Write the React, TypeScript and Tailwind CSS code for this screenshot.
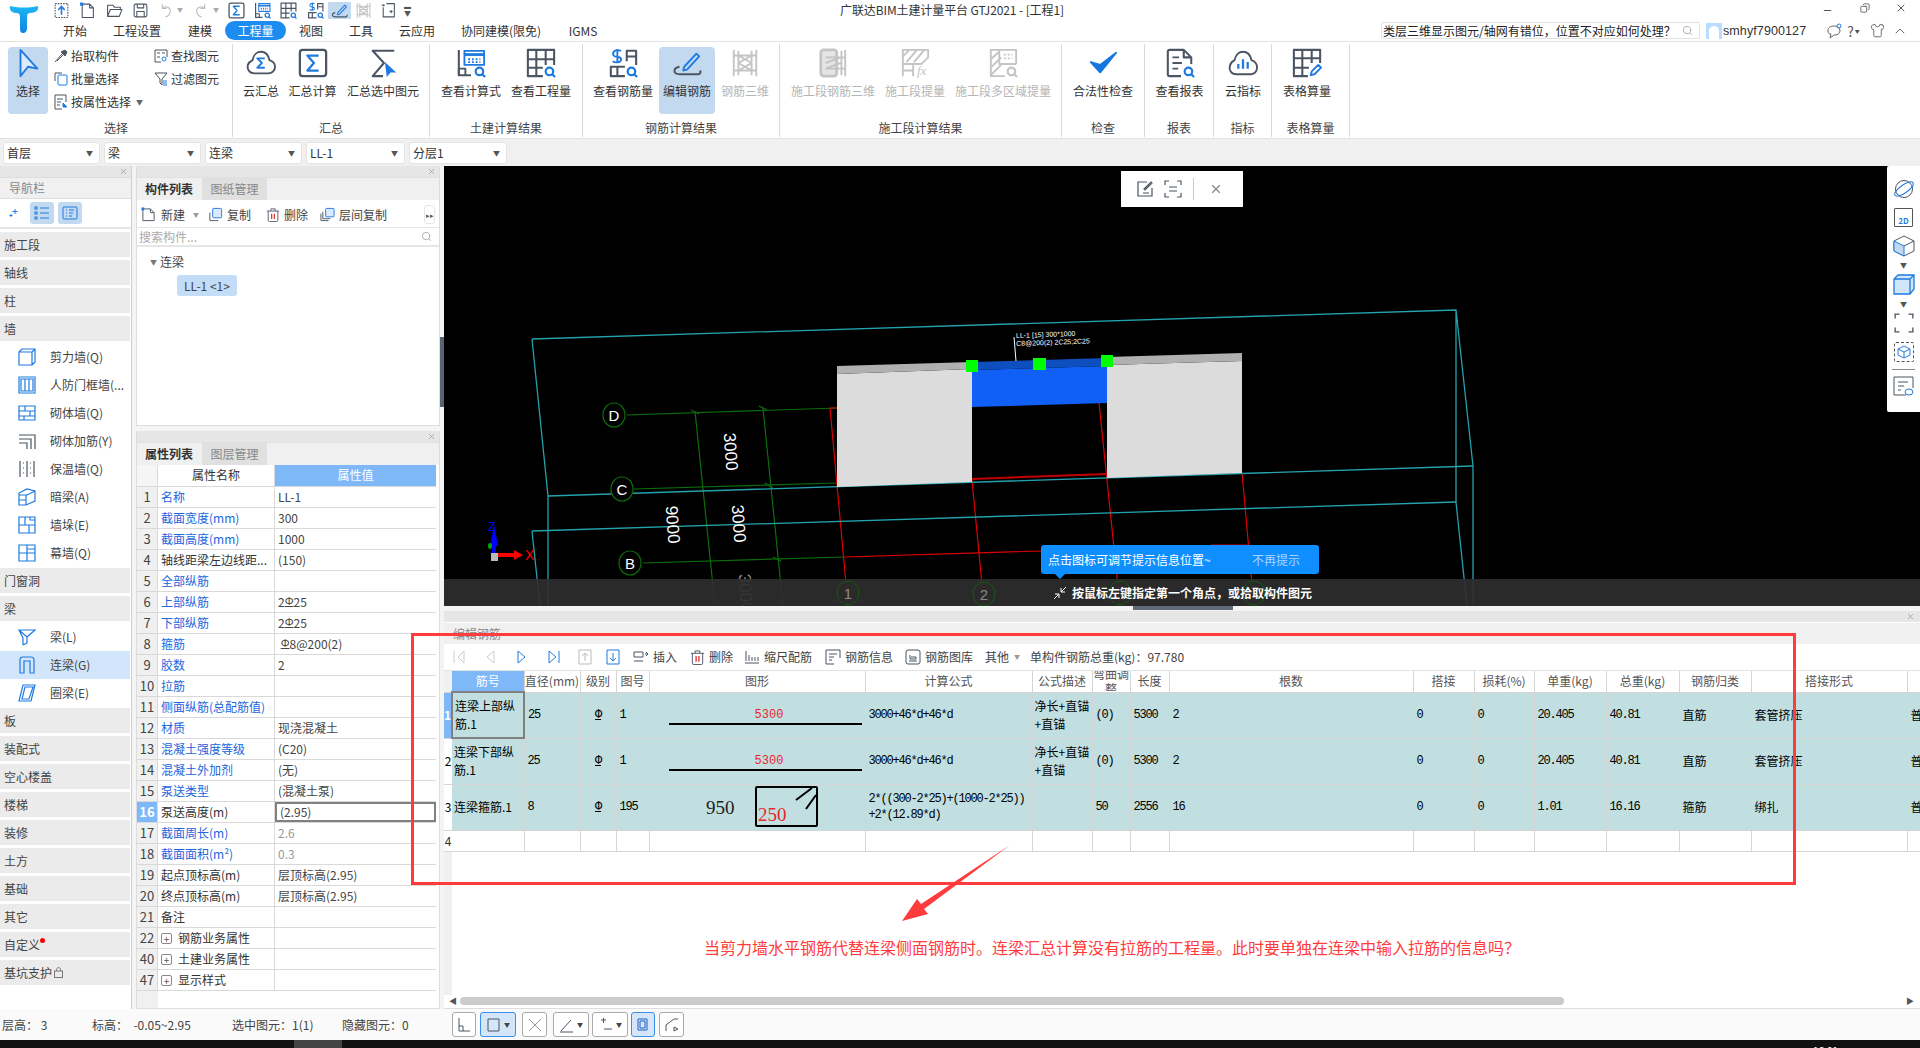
import { ChevronUp, Shirt, Search, X, Minus, Copy } from 'lucide-react'
import type { ReactNode } from 'react'

const FONT = '"Noto Sans CJK SC", "Noto Sans", sans-serif'
const DARK = '#4b5563'
const BLUE = '#1f7ae0'
const GREY = '#c4c4c4'

function Ico({ size = 30, children, className }: { size?: number; children: ReactNode; className?: string }) {
  return (
    <svg width={size} height={size} viewBox="0 0 32 32" fill="none" strokeWidth={2} strokeLinejoin="round" className={className}>
      {children}
    </svg>
  )
}

// ribbon icons, all on the same 32 box
const IconSelect = ({ size = 30 }: { size?: number }) => (
  <Ico size={size}><path d="M8 2 L26 22 L16 20 L8 30 Z" stroke={BLUE} fill="#dbeafe" /></Ico>
)
const IconCloudSigma = ({ size = 30 }: { size?: number }) => (
  <Ico size={size}>
    <path d="M9 27 C3 27 1 22 2 18 C3 15 5 14 7 13 C8 7 12 4 16 4 C21 4 24 8 25 13 C28 14 31 16 31 20 C31 25 27 27 24 27 Z" stroke={DARK} />
    <path d="M20 11 H12 L17 16 L12 21 H20" stroke={BLUE} />
  </Ico>
)
const IconBoxSigma = ({ size = 30 }: { size?: number }) => (
  <Ico size={size}>
    <rect x="2" y="2" width="28" height="28" rx="3" stroke={DARK} strokeWidth={2.4} />
    <path d="M22 8 H10 L17 16 L10 24 H22" stroke={BLUE} strokeWidth={2.4} />
  </Ico>
)
const IconSigmaArrow = ({ size = 30 }: { size?: number }) => (
  <Ico size={size}>
    <path d="M28 3 H5 L17 16 L5 30 H16" stroke={DARK} strokeWidth={2.2} />
    <path d="M18 15 L30 26 L24 26 L20 31 Z" fill={BLUE} />
  </Ico>
)
const Lens = ({ x = 25, y = 25 }: { x?: number; y?: number }) => (
  <g stroke={BLUE} strokeWidth={2.4}>
    <circle cx={x} cy={y} r="4" />
    <path d={`M${x + 3} ${y + 3} L${x + 6} ${y + 6}`} />
  </g>
)
const IconCalcFormula = ({ size = 30 }: { size?: number }) => (
  <Ico size={size}>
    <path d="M3 2 V29 H16" stroke={DARK} strokeWidth={2.2} />
    <path d="M3 29 V22 H10 V29" stroke={DARK} strokeWidth={2} />
    <rect x="9" y="3" width="21" height="15" stroke={BLUE} />
    <path d="M9 7 H30" stroke={BLUE} strokeWidth={3} />
    <path d="M13 12 H26 M13 15 H26" stroke={BLUE} strokeDasharray="2 2" />
    <Lens />
  </Ico>
)
const IconGridQ = ({ size = 30 }: { size?: number }) => (
  <Ico size={size}>
    <path d="M18 30 H2 V2 H30 V18 M2 12 H30 M2 21 H18 M11 2 V30 M21 2 V18" stroke={DARK} strokeWidth={2.2} />
    <Lens />
  </Ico>
)
const IconRebarQ = ({ size = 30 }: { size?: number }) => (
  <Ico size={size}>
    <path d="M18 30 H3 V20 H18 M10 20 V30 M20 14 V3 H30 V18 M20 9 H30" stroke={DARK} strokeWidth={2.2} />
    <path d="M14 3 C8 1 4 4 6 8 C8 11 14 8 14 12 C14 16 7 16 5 14 M10 1 V16" stroke={BLUE} />
    <Lens />
  </Ico>
)
const IconEditRebar = ({ size = 30 }: { size?: number }) => (
  <Ico size={size}>
    <path d="M13 20 L12 24 L16 23 L29 9 L26 6 Z" stroke={BLUE} />
    <path d="M8 20 C3 21 2 23 3 26 C4 28 6 28 9 28 H28 C30 28 31 26 30 24" stroke={DARK} strokeWidth={2.2} />
  </Ico>
)
const IconRebar3D = ({ size = 30, color = GREY }: { size?: number; color?: string }) => (
  <Ico size={size}>
    <path d="M4 2 V30 M28 2 V30 M9 3 V29 M23 3 V29 M4 8 H28 M4 24 H28 M9 8 L23 16 L9 24 M23 8 L9 16 L23 24" stroke={color} />
  </Ico>
)
const IconStage3D = ({ size = 30 }: { size?: number }) => (
  <Ico size={size}>
    <rect x="3" y="2" width="17" height="28" rx="3" stroke={GREY} strokeWidth={3} fill="#e5e5e5" />
    <path d="M29 2 V30 M25 3 V29 M8 10 H29 M8 22 H29 M8 16 L24 10 M8 22 L24 16" stroke={GREY} />
  </Ico>
)
const IconStageFx = () => (
  <Ico>
    <path d="M3 2 H30 V10 L23 17 H3 Z M10 2 L3 9 M18 2 L7 15 M26 2 L15 15" stroke={GREY} />
    <path d="M3 17 V30 M3 24 H14 M14 17 V30" stroke={GREY} />
    <text x="18" y="29" fontSize="14" fontStyle="italic" fontFamily="Liberation Serif" fill={GREY}>fx</text>
  </Ico>
)
const IconStageMulti = () => (
  <Ico>
    <path d="M18 30 H3 V2 H30 V17 M12 2 V17 H30" stroke={GREY} />
    <path d="M3 12 L12 4 M3 21 L14 10 M3 29 L14 18" stroke={GREY} />
    <path d="M17 7 H26 M17 11 H26" stroke={GREY} strokeDasharray="2 2" />
    <g stroke={GREY} strokeWidth={2.4}><circle cx="25" cy="25" r="4" /><path d="M28 28 L31 31" /></g>
  </Ico>
)
const IconCheck = () => (
  <Ico><path d="M3 15 L13 26 L30 5 L13 18 Z" fill="#1677e0" stroke="#1677e0" /></Ico>
)
const IconReport = () => (
  <Ico>
    <path d="M17 30 H5 A2 2 0 0 1 3 28 V4 A2 2 0 0 1 5 2 H20 L28 10 V17 M20 2 V10 H28" stroke={DARK} strokeWidth={2.2} />
    <path d="M8 10 H15 M8 16 H18 M8 22 H14" stroke={DARK} />
    <Lens />
  </Ico>
)
const IconCloudBars = () => (
  <Ico>
    <path d="M9 28 C3 28 1 23 2 19 C3 15 5 14 7 13 C8 7 12 4 16 4 C21 4 24 8 25 13 C28 14 31 17 31 21 C31 26 27 28 24 28 Z" stroke={DARK} />
    <path d="M11 17 V22 M16 12 V22 M21 15 V22" stroke={BLUE} strokeWidth={2.4} />
  </Ico>
)
const IconGridEdit = () => (
  <Ico>
    <path d="M17 30 H2 V2 H30 V16 M2 11 H30 M2 21 H18 M11 2 V30 M21 2 V16" stroke={DARK} strokeWidth={2.2} />
    <path d="M20 29 L21 25 L28 18 L31 21 L24 28 Z" stroke={BLUE} />
  </Ico>
)
// bin with the two red bars the reference draws inside it
const IconBin = ({ size = 15 }: { size?: number }) => (
  <svg width={size} height={size} viewBox="0 0 16 16" fill="none" stroke={DARK}>
    <path d="M1 3.5 H15 M5.5 3.5 V1 H10.5 V3.5 M2.5 3.5 V14 A1.5 1.5 0 0 0 4 15.5 H12 A1.5 1.5 0 0 0 13.5 14 V3.5" />
    <path d="M6.5 6.5 V12.5 M9.5 6.5 V12.5" stroke="#e02020" strokeWidth={1.3} />
  </svg>
)

function BigButton({ label, icon, w, active, muted }: { label: string; icon: ReactNode; w: number; active?: boolean; muted?: boolean }) {
  return (
    <div
      className={`flex flex-col items-center shrink-0 h-[67px] rounded ${active ? 'bg-[#c3d9f0]' : ''}`}
      style={{ width: w }}
    >
      <div className="h-[32px] flex items-center">{icon}</div>
      <span className={`mt-[4px] whitespace-nowrap ${muted ? 'text-[#b5b5b5]' : 'text-[#333]'}`}>{label}</span>
    </div>
  )
}

function RibbonGroup({ label, w, children }: { label: string; w: number; children: ReactNode }) {
  return (
    <div className="shrink-0 flex flex-col border-r border-[#d9d9d9] h-[93px] mt-[2px]" style={{ width: w }}>
      <div className="flex h-[76px] pt-[3px]">{children}</div>
      <div className="text-center text-[#444] leading-[16px]">{label}</div>
    </div>
  )
}

function SmallAction({ icon, label, caret }: { icon: ReactNode; label: string; caret?: boolean }) {
  return (
    <div className="flex items-center h-[23px] whitespace-nowrap">
      <span className="w-[17px] flex justify-center">{icon}</span>
      <span className="ml-[2px] text-[#333]">{label}</span>
      {caret && <span className="ml-[5px] text-[7px] text-[#666]">▼</span>}
    </div>
  )
}

function Caret() {
  return <span className="text-[7px] text-[#555]">▼</span>
}

function Combo({ value, w }: { value: string; w: number }) {
  return (
    <div className="h-[22px] bg-white rounded-[3px] border border-[#e4e4e4] flex items-center justify-between px-[3px] pr-[6px]" style={{ width: w }}>
      <span className="text-[#333]">{value}</span>
      <Caret />
    </div>
  )
}

const MENUS: [string, number][] = [
  ['开始', 48], ['工程设置', 76], ['建模', 50], ['工程量', 61], ['视图', 50], ['工具', 50], ['云应用', 62], ['协同建模(限免)', 106], ['IGMS', 58],
]

function QuickBar() {
  const s = 17
  return (
    <div className="flex items-center w-[420px] h-[20px]">
      <span className="ml-[53px] w-[26px]"><Ico size={s}><rect x="4" y="3" width="24" height="26" stroke={DARK} strokeDasharray="3 2" /><path d="M16 24 V10 M10 15 L16 8 L22 15" stroke={BLUE} strokeWidth={3} /></Ico></span>
      <span className="w-[27px]"><Ico size={s}><path d="M6 4 H20 L27 11 V29 H6 Z M20 4 V11 H27" stroke={DARK} /><rect x="2" y="1" width="6" height="6" fill={BLUE} /></Ico></span>
      <span className="w-[26px]"><Ico size={s}><path d="M3 27 V6 H13 L16 10 H27 V14 M3 27 L8 14 H30 L25 27 Z" stroke={DARK} /></Ico></span>
      <span className="w-[25px]"><Ico size={s}><rect x="4" y="4" width="24" height="24" rx="3" stroke={DARK} /><path d="M10 4 V11 H22 V4 M9 28 V18 H23 V28" stroke={DARK} /></Ico></span>
      <span className="w-[36px] flex items-center"><Ico size={s}><path d="M10 12 C16 6 26 10 25 18 C24 24 20 27 16 28 M10 4 V12 H18" stroke="#bbb" /></Ico><span className="text-[6px] text-[#aaa] ml-[3px]">▼</span></span>
      <span className="w-[35px] flex items-center"><Ico size={s}><path d="M22 12 C16 6 6 10 7 18 C8 24 12 27 16 28 M22 4 V12 H14" stroke="#bbb" /></Ico><span className="text-[6px] text-[#aaa] ml-[3px]">▼</span></span>
      <span className="w-[26px]"><IconBoxSigma size={s} /></span>
      <span className="w-[26px]"><IconCalcFormula size={s} /></span>
      <span className="w-[27px]"><IconGridQ size={s} /></span>
      <span className="w-[17px] -mr-[1px]"><IconRebarQ size={s} /></span>
      <span className="ml-[5px] w-[23px] h-[17px] bg-[#c3d9f0] flex justify-center"><IconEditRebar size={s} /></span>
      <span className="ml-[4px] w-[25px]"><IconRebar3D size={s} /></span>
      <span className="w-[24px]"><Ico size={s}><path d="M12 3 H27 V28 H6 V10 M18 18 H24 M21 15 V21 M7 4 V8 M3 6 H9" stroke={DARK} /></Ico></span>
      <span className="text-[7px] text-[#555] leading-[7px]">▬<br />▼</span>
    </div>
  )
}

function TopBar() {
  return (
    <div className="h-[41px] flex shrink-0 relative">
      <div className="absolute left-[8px] top-[4px]">
        <svg width="32" height="30" viewBox="0 0 32 30">
          <defs>
            <linearGradient id="logoGrad" x1="0" y1="0" x2="0" y2="1">
              <stop offset="0" stopColor="#1fb6f2" />
              <stop offset="1" stopColor="#0a84e8" />
            </linearGradient>
          </defs>
          <path d="M2 2 C12 4 20 4 30 2 C31 6 28 9 22 9 C20 9 19 10 19 13 V24 C19 28 17 29 15 29 C12 29 12 26 12 23 V13 C12 10 11 9 8 9 C4 9 1 6 2 2 Z" fill="url(#logoGrad)" />
        </svg>
      </div>
      <div className="flex-1 flex flex-col">
        <div className="flex h-[20px] items-center">
          <QuickBar />
          <span className="ml-[420px] whitespace-nowrap text-[#333] tracking-[-0.1px]">广联达BIM土建计量平台 GTJ2021 - [工程1]</span>
          <div className="ml-auto flex items-center text-[#555] mt-[-4px]">
            <Minus size={11} strokeWidth={2.5} className="mt-[5px]" />
            <Copy size={10} className="ml-[27px] -scale-x-100" />
            <X size={12} className="ml-[25px] mr-[13px]" />
          </div>
        </div>
        <div className="flex h-[21px] items-center pl-[51px]">
          {MENUS.map(([m, w]) => (
            <span
              key={m}
              style={{ width: w }}
              className={`shrink-0 text-center whitespace-nowrap leading-[19px] ${m === '工程量' ? 'bg-[#1c8cf0] text-white rounded-full' : 'text-[#333]'}`}
            >
              {m}
            </span>
          ))}
          <div className="ml-[769px] w-[319px] h-[17px] bg-white rounded-[2px] border border-[#e2e2e2] flex items-center overflow-hidden">
            <span className="whitespace-nowrap flex-1 text-[#222] pl-[1px] overflow-hidden">类层三维显示图元/轴网有错位，位置不对应如何处理？</span>
            <Search size={11} className="text-[#aaa] mx-[6px] shrink-0" />
          </div>
          <div className="ml-[6px] w-[16px] h-[16px] bg-[#bcdcff] flex items-end justify-center overflow-hidden">
            <div className="w-[10px] h-[13px] bg-white rounded-t-full" />
          </div>
          <span className="ml-[1px] text-[#333] font-['Liberation_Sans'] tracking-[0.1px] text-[12.5px]">smhyf7900127</span>
          <div className="flex items-center text-[#555] ml-[20px]">
            <svg width="16" height="16" viewBox="0 0 16 16" fill="none" stroke="#666"><path d="M2 8 C2 4 5 3 8 3 C12 3 14 5 14 8 C14 11 11 12 8 12 L4 15 L5 11 C3 11 2 10 2 8 Z" /><circle cx="13" cy="3" r="2" stroke={BLUE} /></svg>
            <span className="ml-[5px] text-[14px] leading-none">?</span>
            <span className="text-[5px] ml-[1px]">▼</span>
            <Shirt size={15} className="ml-[10px]" strokeWidth={1.3} />
            <ChevronUp size={16} className="ml-[7px]" strokeWidth={1.3} />
          </div>
        </div>
      </div>
    </div>
  )
}

function Ribbon() {
  return (
    <div className="h-[98px] border-t border-b border-[#e3e3e3] flex shrink-0 pl-[0px]">
      <RibbonGroup label="选择" w={233}>
        <div className="ml-[8px]"><BigButton label="选择" icon={<IconSelect />} w={40} active /></div>
        <div className="ml-[4px] w-[105px] -mt-[3px] flex flex-col">
          <SmallAction label="抬取构件" icon={<svg width="14" height="14" viewBox="0 0 14 14" fill="none" stroke={DARK}><path d="M1 13 L8 5 M3 12 L9 6" /><path d="M7 3 L11 7 L13 3 L11 1 Z" fill={DARK} /></svg>} />
          <SmallAction label="批量选择" icon={<svg width="14" height="14" viewBox="0 0 14 14" fill="none" stroke={BLUE}><rect x="4" y="3" width="9" height="10" rx="1" /><path d="M1 9 V1 H8" stroke={DARK} /></svg>} />
          <SmallAction label="按属性选择" caret icon={<svg width="14" height="16" viewBox="0 0 14 16" fill="none" stroke={DARK}><path d="M8 15 H1 V1 H12 V8 M3 5 H9 M3 8 H7 M3 11 H6" /><path d="M9 9 L13 13 H9 Z" fill={BLUE} stroke={BLUE} /></svg>} />
        </div>
        <div className="-ml-[5px] -mt-[3px] flex flex-col">
          <SmallAction label="查找图元" icon={<svg width="14" height="14" viewBox="0 0 14 14" fill="none" stroke={DARK}><path d="M7 13 H1 V1 H13 V8 M3 4 H6 M8 4 H11 M3 8 H6" /><circle cx="10" cy="10" r="2" stroke={BLUE} /></svg>} />
          <SmallAction label="过滤图元" icon={<svg width="14" height="14" viewBox="0 0 14 14" fill="none" stroke={DARK}><path d="M1 1 H13 L8 7 V13 L6 11 V7 Z" /><path d="M9 9 H13 M9 11 H13 M9 13 H13" stroke={BLUE} /></svg>} />
        </div>
      </RibbonGroup>
      <RibbonGroup label="汇总" w={197}>
        <BigButton label="云汇总" icon={<IconCloudSigma />} w={56} />
        <BigButton label="汇总计算" icon={<IconBoxSigma />} w={47} />
        <BigButton label="汇总选中图元" icon={<IconSigmaArrow />} w={94} />
      </RibbonGroup>
      <RibbonGroup label="土建计算结果" w={153}>
        <BigButton label="查看计算式" icon={<IconCalcFormula />} w={82} />
        <BigButton label="查看工程量" icon={<IconGridQ />} w={58} />
      </RibbonGroup>
      <RibbonGroup label="钢筋计算结果" w={197}>
        <div className="w-[76px] pl-[4px] shrink-0"><BigButton label="查看钢筋量" icon={<IconRebarQ />} w={72} /></div>
        <BigButton label="编辑钢筋" icon={<IconEditRebar />} w={56} active />
        <BigButton label="钢筋三维" icon={<IconRebar3D />} w={60} muted />
      </RibbonGroup>
      <RibbonGroup label="施工段计算结果" w={282}>
        <BigButton label="施工段钢筋三维" icon={<IconStage3D />} w={106} muted />
        <BigButton label="施工段提量" icon={<IconStageFx />} w={58} muted />
        <BigButton label="施工段多区域提量" icon={<IconStageMulti />} w={118} muted />
      </RibbonGroup>
      <RibbonGroup label="检查" w={83}><BigButton label="合法性检查" icon={<IconCheck />} w={82} /></RibbonGroup>
      <RibbonGroup label="报表" w={69}><BigButton label="查看报表" icon={<IconReport />} w={69} /></RibbonGroup>
      <RibbonGroup label="指标" w={58}><BigButton label="云指标" icon={<IconCloudBars />} w={58} /></RibbonGroup>
      <RibbonGroup label="表格算量" w={78}><BigButton label="表格算量" icon={<IconGridEdit />} w={70} /></RibbonGroup>
    </div>
  )
}

function CloseBar({ right = 3 }: { right?: number }) {
  return (
    <div className="h-[11px] bg-[#e6e6e6] flex items-center justify-end shrink-0" style={{ paddingRight: right }}>
      <X size={9} className="text-[#999]" />
    </div>
  )
}

type NavSub = { label: string; icon: ReactNode; active?: boolean }
const wallIcon = (d: string, color = BLUE) => (
  <svg width="18" height="18" viewBox="0 0 18 18" fill="none" stroke={color} strokeWidth={1.2}><path d={d} /></svg>
)
const WALLS: NavSub[] = [
  { label: '剪力墙(Q)', icon: wallIcon('M1 4 H14 V17 H1 Z M1 4 L4 1 H17 V14 L14 17 M14 4 L17 1') },
  { label: '人防门框墙(...', icon: wallIcon('M1 1 H17 V17 H1 Z M3 3 H15 V15 H3 Z M7 3 V15 M11 3 V15') },
  { label: '砌体墙(Q)', icon: wallIcon('M1 2 H17 V16 H1 Z M1 7 H17 M1 12 H17 M7 2 V7 M12 7 V12 M6 12 V16') },
  { label: '砌体加筋(Y)', icon: wallIcon('M1 3 H17 V17 M1 7 H13 V17 M1 11 H9 V17', DARK) },
  { label: '保温墙(Q)', icon: wallIcon('M2 1 V17 M9 1 V17 M16 1 V17 M5 3 H6 M12 3 H13 M5 8 H6 M12 8 H13 M5 13 H6 M12 13 H13', DARK) },
  { label: '暗梁(A)', icon: wallIcon('M1 7 V17 H8 L17 13 V3 L9 1 L1 5 Z M1 7 H9 L17 3 M8 7 V17 M1 12 H8') },
  { label: '墙垛(E)', icon: wallIcon('M1 1 H17 V17 H1 Z M1 9 H17 M7 1 V9 M11 9 V17 M12 1 V4 H17') },
  { label: '幕墙(Q)', icon: wallIcon('M1 1 H17 V17 H1 Z M1 9 H17 M9 1 V17 M9 5 H17') },
]
const BEAMS: NavSub[] = [
  { label: '梁(L)', icon: wallIcon('M1 2 H17 L9 9 Z M1 2 L5 10 V17 M17 2 L9 9 V15 L5 17') },
  { label: '连梁(G)', icon: wallIcon('M2 17 V4 C2 2 3 1 5 1 H13 C15 1 16 2 16 4 V17 H12 V5 H6 V17 Z'), active: true },
  { label: '圈梁(E)', icon: wallIcon('M5 1 H17 L13 17 H1 Z M7 3 H15 L11 15 H4 Z') },
]

function NavHead({ label, children }: { label?: string; children?: ReactNode }) {
  return (
    <div className="h-[25px] mt-[3px] mr-[1px] bg-[#ebebeb] flex items-center pl-[4px] text-[#444] shrink-0">
      {label}
      {children}
    </div>
  )
}

function NavSubs({ items }: { items: NavSub[] }) {
  return (
    <div className="mt-[2px] -mb-[2px]">
      {items.map((it) => (
        <div key={it.label} className={`h-[28px] flex items-center mr-[1px] ${it.active ? 'bg-[#d2e6fb]' : ''}`}>
          <span className="ml-[18px] w-[18px] h-[18px] flex">{it.icon}</span>
          <span className="ml-[14px] text-[#444] whitespace-nowrap">{it.label}</span>
        </div>
      ))}
    </div>
  )
}

function NavBar() {
  return (
    <div className="w-[132px] shrink-0 bg-white border-r border-[#cfcfcf] flex flex-col overflow-hidden">
      <CloseBar />
      <div className="h-[22px] bg-[#f0f0f0] border-y border-[#ddd] text-[#888] pl-[9px] flex items-center shrink-0">导航栏</div>
      <div className="h-[30px] border-b-2 border-[#e6e6e6] flex items-center pl-[9px] shrink-0">
        <svg width="10" height="10" viewBox="0 0 10 10" stroke={BLUE} fill="none"><path d="M6 1 V6 M3.5 3.5 H8.5 M2 6 V9 M0.5 7.5 H3.5" /></svg>
        <span className="ml-[11px] w-[24px] h-[22px] bg-[#c3d9f0] rounded-[3px] flex items-center justify-center">
          <svg width="16" height="14" viewBox="0 0 16 14" stroke={BLUE} fill="none"><path d="M6 2 H15 M6 7 H15 M6 12 H15" /><rect x="1" y="1" width="2" height="2" /><rect x="1" y="6" width="2" height="2" /><rect x="1" y="11" width="2" height="2" /></svg>
        </span>
        <span className="ml-[4px] w-[24px] h-[22px] bg-[#c3d9f0] rounded-[3px] flex items-center justify-center">
          <svg width="16" height="14" viewBox="0 0 16 14" stroke={BLUE} fill="none"><rect x="1" y="1" width="14" height="12" rx="1" /><path d="M4 4 H5 M7 4 H12 M4 7 H5 M7 7 H11 M4 10 H5 M7 10 H10" /></svg>
        </span>
      </div>
      <NavHead label="施工段" />
      <NavHead label="轴线" />
      <NavHead label="柱" />
      <NavHead label="墙" />
      <NavSubs items={WALLS} />
      <NavHead label="门窗洞" />
      <NavHead label="梁" />
      <NavSubs items={BEAMS} />
      <NavHead label="板" />
      <NavHead label="装配式" />
      <NavHead label="空心楼盖" />
      <NavHead label="楼梯" />
      <NavHead label="装修" />
      <NavHead label="土方" />
      <NavHead label="基础" />
      <NavHead label="其它" />
      <NavHead>
        <span className="relative">自定义<span className="absolute -right-[5px] top-[1px] w-[5px] h-[5px] rounded-full bg-[#f00]" /></span>
      </NavHead>
      <NavHead>
        基坑支护
        <svg width="9" height="11" viewBox="0 0 9 11" fill="none" stroke="#777" className="ml-[2px]"><rect x="0.5" y="4" width="8" height="6.5" /><path d="M2.5 4 V2.5 C2.5 0 6.5 0 6.5 2.5 V4" /></svg>
      </NavHead>
    </div>
  )
}

function PanelTabs({ active, other }: { active: string; other: string }) {
  return (
    <div className="h-[23px] bg-[#f0f0f0] flex shrink-0 border-t border-[#e0e0e0]">
      <div className="w-[64px] text-center font-bold text-[#333] leading-[22px]">{active}</div>
      <div className="w-[65px] bg-[#e0e0e0] text-center text-[#888] leading-[22px] ml-[1px]">{other}</div>
    </div>
  )
}

function TinyButton({ icon, label, w }: { icon: ReactNode; label: string; w: number }) {
  return (
    <div className="flex items-center shrink-0" style={{ width: w }}>
      {icon}
      <span className="ml-[4px] text-[#444] whitespace-nowrap">{label}</span>
    </div>
  )
}

function ComponentList() {
  return (
    <div className="h-[260px] shrink-0 flex flex-col bg-white border border-[#ddd] border-t-0">
      <CloseBar />
      <PanelTabs active="构件列表" other="图纸管理" />
      <div className="h-[28px] pt-[2px] flex items-center pl-[4px] border-b border-[#e6e6e6] shrink-0">
        <div className="flex items-center w-[67px] shrink-0">
          <Ico size={15}><path d="M4 4 H20 L28 12 V29 H4 Z M20 4 V12 H28" stroke={DARK} /><rect x="1" y="1" width="6" height="6" fill={BLUE} /></Ico>
          <span className="ml-[5px] text-[#444]">新建</span>
          <span className="ml-[8px] text-[6px] text-[#999]">▼</span>
        </div>
        <TinyButton w={58} label="复制" icon={<Ico size={15}><path d="M4 12 V29 H22" stroke={DARK} /><rect x="10" y="3" width="19" height="20" rx="2" stroke={BLUE} fill="#dbeafe" /></Ico>} />
        <TinyButton w={54} label="删除" icon={<IconBin size={14} />} />
        <TinyButton w={100} label="层间复制" icon={<Ico size={15}><path d="M2 14 V29 H18 M6 10 V25 H22" stroke={DARK} /><rect x="12" y="3" width="18" height="18" rx="2" stroke={BLUE} fill="#dbeafe" /></Ico>} />
        <span className="ml-[4px] w-[11px] h-[19px] border border-[#e6e6e6] rounded-[3px] text-[7px] text-[#555] flex items-center justify-center">▸▸</span>
      </div>
      <div className="h-[19px] flex items-center justify-between border-b-2 border-[#e6e6e6] pl-[2px] pr-[7px] text-[#aaa] shrink-0">
        <span>搜索构件...</span>
        <Search size={11} />
      </div>
      <div className="flex-1 pl-[13px] pt-[5px]">
        <div className="flex items-center h-[20px]">
          <span className="text-[7px] text-[#777]">▼</span>
          <span className="ml-[3px] text-[#444]">连梁</span>
        </div>
        <div className="ml-[27px] mt-[3px] w-[60px] h-[21px] bg-[#c3ddf7] rounded-[3px] text-[#444] flex items-center justify-center whitespace-nowrap">LL-1 &lt;1&gt;</div>
      </div>
    </div>
  )
}

type Prop = { n: string; name: string; blue?: boolean; value?: ReactNode; grey?: boolean; group?: boolean; focus?: boolean }
const BAR = <span className="underline text-[11px] relative -top-[2px]">Φ</span>
const PROPS: Prop[] = [
  { n: '1', name: '名称', blue: true, value: 'LL-1' },
  { n: '2', name: '截面宽度(mm)', blue: true, value: '300' },
  { n: '3', name: '截面高度(mm)', blue: true, value: '1000' },
  { n: '4', name: '轴线距梁左边线距...', value: '(150)' },
  { n: '5', name: '全部纵筋', blue: true },
  { n: '6', name: '上部纵筋', blue: true, value: <>2{BAR}25</> },
  { n: '7', name: '下部纵筋', blue: true, value: <>2{BAR}25</> },
  { n: '8', name: '箍筋', blue: true, value: <>&nbsp;{BAR}8@200(2)</> },
  { n: '9', name: '胶数', blue: true, value: '2' },
  { n: '10', name: '拉筋', blue: true },
  { n: '11', name: '侧面纵筋(总配筋值)', blue: true },
  { n: '12', name: '材质', blue: true, value: '现浇混凝土' },
  { n: '13', name: '混凝土强度等级', blue: true, value: '(C20)' },
  { n: '14', name: '混凝土外加剂', blue: true, value: '(无)' },
  { n: '15', name: '泵送类型', blue: true, value: '(混凝土泵)' },
  { n: '16', name: '泵送高度(m)', value: '(2.95)', focus: true },
  { n: '17', name: '截面周长(m)', blue: true, value: '2.6', grey: true },
  { n: '18', name: '截面面积(m²)', blue: true, value: '0.3', grey: true },
  { n: '19', name: '起点顶标高(m)', value: '层顶标高(2.95)' },
  { n: '20', name: '终点顶标高(m)', value: '层顶标高(2.95)' },
  { n: '21', name: '备注' },
  { n: '22', name: '钢筋业务属性', group: true },
  { n: '40', name: '土建业务属性', group: true },
  { n: '47', name: '显示样式', group: true },
]

function PropertyList() {
  return (
    <div className="flex-1 mt-[5px] flex flex-col bg-white border border-[#ddd] border-t-0">
      <CloseBar />
      <PanelTabs active="属性列表" other="图层管理" />
      <div className="flex h-[22px] w-[299px] shrink-0 border-b border-[#d9d9d9]">
        <div className="w-[21px] bg-[#f5f5f5] border-r border-[#d9d9d9]" />
        <div className="w-[117px] text-center text-[#333] border-r border-[#d9d9d9] leading-[20px]">属性名称</div>
        <div className="w-[161px] text-center text-white bg-[#7eb8f8] leading-[20px]">属性值</div>
      </div>
      {PROPS.map((p) => (
        <div key={p.n} className="flex h-[21px] w-[299px] shrink-0 border-b border-[#d9d9d9]">
          <div className={`w-[21px] text-center border-r border-[#d9d9d9] text-[13px] leading-[20px] ${p.focus ? 'bg-[#7eb8f8] text-white font-bold' : 'bg-[#f0f0f0] text-[#444]'}`}>{p.n}</div>
          <div className={`w-[117px] border-r border-[#d9d9d9] pl-[3px] flex items-center whitespace-nowrap overflow-hidden ${p.blue ? 'text-[#2266dd]' : 'text-[#333]'}`}>
            {p.group && <span className="w-[11px] h-[11px] border border-[#888] rounded-[2px] text-[10px] leading-[9px] text-center mr-[6px] text-[#555]">+</span>}
            {p.name}
          </div>
          <div className={`w-[161px] pl-[3px] flex items-center whitespace-nowrap ${p.grey ? 'text-[#999]' : 'text-[#444]'} ${p.focus ? 'border-2 border-[#808080]' : ''}`}>{p.value}</div>
        </div>
      ))}
      <div className="flex-1 w-[21px] bg-[#f0f0f0]" />
    </div>
  )
}

// the 3D view, drawn in page coordinates so the numbers read straight off the reference
function Scene() {
  const teal = '#24a3ad'
  const green = '#0b6e0b'
  const red = '#e00000'
  return (
    <svg className="absolute inset-0" width="1476" height="440" viewBox="444 166 1476 440" fontFamily="Liberation Sans, sans-serif">
      <g stroke={green} strokeWidth="1.2" fill="none">
        <path d="M627 415 L837 408 M634 489 L837 483 M643 563 L844 557" />
        <path d="M695 411 L715 606 M763 408 L783 606" />
        <path d="M691 410 L699 414 M759 406 L767 410 M765 483 L773 488 M773 557 L781 561" />
      </g>
      <g stroke={red} strokeWidth="1.2" fill="none">
        <path d="M830 408 L848 606 M972 480 L984 606 M1099 403 L1120 606 M1242 473 L1254 606" />
        <path d="M830 408 L838 408 M844 557 L1041 551 M1211 545 L1249 545" />
        <path d="M972 479 L1107 474" strokeWidth="2" stroke="#c00000" />
      </g>
      <g stroke={teal} strokeWidth="1.3" fill="none">
        <path d="M532 339 L1456 310 L1473 466 V606 M1456 310 V502 L1467 606" />
        <path d="M532 339 L548 496 V606 M532 531 L540 606" />
        <path d="M548 496 L1473 466 M532 531 L1456 502" />
      </g>
      <polygon points="837,374 972,369 972,482 837,487" fill="#dcdcdc" />
      <polygon points="837,366 972,362 972,369 837,374" fill="#b0b0b0" />
      <polygon points="1107,365 1242,361 1242,473 1107,478" fill="#dcdcdc" />
      <polygon points="1107,357 1242,353 1242,361 1107,365" fill="#b0b0b0" />
      <polygon points="972,370 1107,366 1107,403 972,407" fill="#1060f8" />
      <polygon points="972,362 1107,358 1107,366 972,370" fill="#0e4fc0" />
      <rect x="966" y="360" width="12" height="12" fill="#00ff00" />
      <rect x="1033" y="358" width="13" height="12" fill="#00ff00" />
      <rect x="1101" y="355" width="12" height="12" fill="#00ff00" />
      <path d="M1016 361 L1014 337" stroke="#fff" />
      <g fill="#fff" fontSize="7" transform="rotate(-2 1016 338)">
        <text x="1016" y="338">LL-1 [15] 300*1000</text>
        <text x="1016" y="346">C8@200(2) 2C25;2C25</text>
      </g>
      <g stroke={green} strokeWidth="1.2" fill="#000">
        <ellipse cx="614" cy="415" rx="11" ry="12" />
        <ellipse cx="622" cy="489" rx="11" ry="12" />
        <ellipse cx="630" cy="563" rx="11" ry="12" />
      </g>
      <g fill="#fff" fontSize="15" textAnchor="middle">
        <text x="614" y="421">D</text>
        <text x="622" y="495">C</text>
        <text x="630" y="569">B</text>
      </g>
      <g fill="#fff" fontSize="17" textAnchor="middle">
        <text transform="translate(725 452) rotate(86)">3000</text>
        <text transform="translate(733 524) rotate(86)">3000</text>
        <text transform="translate(667 525) rotate(86)">9000</text>
        <text transform="translate(740 593) rotate(86)" fill="#888">3000</text>
      </g>
      <path d="M494 524 L490 546 H498 Z" fill="#0000ff" />
      <rect x="492" y="544" width="4" height="10" fill="#0000ff" />
      <ellipse cx="490" cy="546" rx="2" ry="3" fill="#0a0" />
      <rect x="491" y="553" width="7" height="8" fill="#bbb" />
      <path d="M498 553 H514 V550 L523 555 L514 560 V557 H498 Z" fill="#f00" />
      <text x="525" y="560" fontSize="14" fill="#f00">X</text>
      <text x="488" y="531" fontSize="12" fill="#00f">Z</text>
      <rect x="444" y="579" width="1476" height="27" fill="#2e2e2e" fillOpacity="0.92" />
      <g stroke={green} strokeWidth="1" fill="none" opacity="0.7">
        <ellipse cx="848" cy="593" rx="11" ry="12" />
        <ellipse cx="984" cy="594" rx="11" ry="12" />
        <ellipse cx="1120" cy="593" rx="11" ry="12" />
        <ellipse cx="1254" cy="593" rx="11" ry="12" />
      </g>
      <g fill="#888" fontSize="15" textAnchor="middle">
        <text x="848" y="599">1</text>
        <text x="984" y="600">2</text>
      </g>
    </svg>
  )
}

function FloatIcon({ d, size = 18 }: { d: string; size?: number }) {
  return (
    <svg width={size} height={size} viewBox="0 0 18 18" fill="none" stroke={DARK} strokeWidth={1.2}><path d={d} /></svg>
  )
}

function ViewDock() {
  return (
    <div className="absolute right-0 top-0 w-[33px] h-[246px] bg-white rounded-l-[2px] flex flex-col items-center pt-[12px]">
      <svg width="22" height="22" viewBox="0 0 22 22" fill="none"><circle cx="11" cy="11" r="8.5" stroke={DARK} /><ellipse cx="11" cy="11" rx="11" ry="4" transform="rotate(-35 11 11)" stroke={BLUE} /></svg>
      <div className="mt-[8px] w-[19px] h-[19px] border border-[#555] rounded-[1px] flex items-end justify-center text-[8px] leading-[10px] font-bold text-[#1f7ae0]">2D</div>
      <svg width="22" height="22" viewBox="0 0 22 22" fill="#c3d9f0" stroke={DARK} className="mt-[8px]"><path d="M11 1 L21 6 V16 L11 21 L1 16 V6 Z" fill="none" /><path d="M1 6 L11 11 V21 L1 16 Z" stroke={BLUE} /><path d="M11 11 L21 6" /></svg>
      <span className="mt-[4px] text-[7px] leading-[9px] text-[#555]">▼</span>
      <svg width="22" height="22" viewBox="0 0 22 22" fill="#d2e6fb" stroke={BLUE} strokeWidth={1.3} className="mt-[4px]"><path d="M5 1 H21 V15 L17 20 H1 V5 Z" /><path d="M1 5 H17 V20 M17 5 L21 1" fill="none" /></svg>
      <span className="mt-[4px] text-[7px] leading-[9px] text-[#555]">▼</span>
      <div className="mt-[4px] h-[20px]"><FloatIcon size={20} d="M1 5 V1 H5 M13 1 H17 V5 M17 13 V17 H13 M5 17 H1 V13" /></div>
      <div className="mt-[9px] w-[20px] h-[20px] border border-dashed border-[#555] rounded-[2px] flex items-center justify-center">
        <svg width="14" height="14" viewBox="0 0 14 14" fill="none" stroke={BLUE}><path d="M7 1 L13 4 V10 L7 13 L1 10 V4 Z M1 4 L7 7 L13 4 M7 7 V13" /></svg>
      </div>
      <div className="mt-[7px] w-[23px] h-px bg-[#888] shrink-0" />
      <svg width="21" height="20" viewBox="0 0 21 20" fill="none" stroke={DARK} className="mt-[6px]"><path d="M13 19 H1 V1 H20 V12 M5 6 H15 M5 10 H11 M5 14 H8" /><ellipse cx="16" cy="16" rx="4" ry="3" stroke={BLUE} /></svg>
    </div>
  )
}

function Viewport() {
  return (
    <div className="h-[440px] shrink-0 bg-black relative overflow-hidden">
      <Scene />
      <div className="absolute left-[677px] top-[5px] w-[122px] h-[36px] bg-white flex items-center pl-[15px]">
        <FloatIcon d="M11 2 H2 V16 H16 V8 M7 13 H13 M8 9 L15 2 L16 3 L9 10 Z" />
        <span className="ml-[10px]"><FloatIcon d="M1 5 V1 H5 M13 1 H17 V5 M17 13 V17 H13 M5 17 H1 V13 M5 7 H13 M5 11 H13" /></span>
        <span className="ml-[11px] h-[22px] w-px bg-[#ccc]" />
        <X size={14} className="ml-[15px] text-[#888]" />
      </div>
      <ViewDock />
      <div className="absolute left-[597px] top-[379px] w-[278px] h-[29px] bg-[#0f8fff] rounded-[3px] text-white flex items-center pl-[7px] whitespace-nowrap">
        点击图标可调节提示信息位置~
        <span className="ml-auto mr-[19px] text-[#a8d4ff]">不再提示</span>
        <span className="absolute left-[14px] -bottom-[5px] w-0 h-0 border-x-[5px] border-x-transparent border-t-[5px] border-t-[#0f8fff]" />
      </div>
      <div className="absolute left-[609px] top-[413px] h-[27px] flex items-center text-white font-bold text-[12px] whitespace-nowrap">
        <svg width="14" height="14" viewBox="0 0 14 14" fill="none" stroke="#fff" className="mr-[5px]"><path d="M13 1 L8 6 M8 2 V6 H12 M1 13 L6 8 M6 12 V8 H2" /></svg>
        按鼠标左键指定第一个角点，或拾取构件图元
      </div>
    </div>
  )
}

const ToolSvg = ({ d, color = DARK, size = 16 }: { d: string; color?: string; size?: number }) => (
  <svg width={size} height={size} viewBox="0 0 16 16" fill="none" stroke={color}><path d={d} /></svg>
)

type RebarRow = { no: string; name: string; dia: string; fig: string; formula: ReactNode; desc?: string; adj: string; len: string; count: string; w1: string; w2: string; kind: string; lap: string; shape: 'line' | 'stirrup' }
const REBARS: RebarRow[] = [
  { no: '1', name: '连梁上部纵筋.1', dia: '25', fig: '1', formula: '3000+46*d+46*d', desc: '净长+直锚+直锚', adj: '(0)', len: '5300', count: '2', w1: '20.405', w2: '40.81', kind: '直筋', lap: '套管挤压', shape: 'line' },
  { no: '2', name: '连梁下部纵筋.1', dia: '25', fig: '1', formula: '3000+46*d+46*d', desc: '净长+直锚+直锚', adj: '(0)', len: '5300', count: '2', w1: '20.405', w2: '40.81', kind: '直筋', lap: '套管挤压', shape: 'line' },
  { no: '3', name: '连梁箍筋.1', dia: '8', fig: '195', formula: <>2*((300-2*25)+(1000-2*25))<br />+2*(12.89*d)</>, adj: '50', len: '2556', count: '16', w1: '1.01', w2: '16.16', kind: '箍筋', lap: '绑扎', shape: 'stirrup' },
]
const COLS = ['筋号', '直径(mm)', '级别', '图号', '图形', '计算公式', '公式描述', '弯曲调整', '长度', '根数', '搭接', '损耗(%)', '单重(kg)', '总重(kg)', '钢筋归类', '搭接形式', '']
const COL_W = ['w-[8px]', 'w-[72px]', 'w-[56px]', 'w-[36px]', 'w-[33px]', 'w-[216px]', 'w-[167px]', 'w-[60px]', 'w-[38px]', 'w-[39px]', 'w-[244px]', 'w-[61px]', 'w-[60px]', 'w-[72px]', 'w-[73px]', 'w-[72px]', 'w-[156px]', 'w-[13px]']

const MONO = "font-['Liberation_Mono'] text-[12px] tracking-[-1.2px]"

function RebarShape({ kind }: { kind: 'line' | 'stirrup' }) {
  if (kind === 'line') {
    return (
      <svg width="216" height="44" viewBox="0 0 216 44" className="block">
        <text x="119" y="25" textAnchor="middle" fill="#e8262c" fontSize="12" fontFamily="Liberation Mono">5300</text>
        <path d="M19 31 H212" stroke="#000" strokeWidth="2" />
      </svg>
    )
  }
  return (
    <svg width="216" height="44" viewBox="0 0 216 44" className="block">
      <text x="56" y="29" fill="#222" fontSize="19" fontFamily="Liberation Serif">950</text>
      <rect x="106" y="2" width="61" height="39" rx="1" fill="none" stroke="#000" strokeWidth="2" />
      <path d="M146 15 L162 3 M156 24 L166 10" stroke="#000" strokeWidth="2" />
      <text x="108" y="36" fill="#e8262c" fontSize="19" fontFamily="Liberation Serif">250</text>
    </svg>
  )
}

function RebarTable() {
  const cell = 'border-r border-b border-[#d5d5d5] overflow-hidden'
  return (
    <table className="table-fixed border-collapse w-[1476px] shrink-0">
      <colgroup>
        {COL_W.map((w, i) => <col key={i} className={w} />)}
      </colgroup>
      <thead>
        <tr className="h-[21px]">
          <th className="bg-[#f0f0f0] border-b border-[#d5d5d5]" />
          {COLS.map((c, i) => (
            <th key={i} className={`${cell} font-normal p-0 ${i === 0 ? 'bg-[#7eb8f8] text-white font-bold' : 'text-[#555]'}`}>
              {c === '弯曲调整' ? (
                <div className="h-[20px] overflow-hidden">
                  <div className="-mt-[5px] leading-[15px]">{c}</div>
                </div>
              ) : (
                <div className="h-[20px] leading-[20px] whitespace-nowrap">{c}</div>
              )}
            </th>
          ))}
        </tr>
      </thead>
      <tbody>
        {REBARS.map((r) => (
          <tr key={r.no} className="h-[46px] bg-[#c1dfe1] text-black">
            <td className={`p-0 text-center border-b border-[#d5d5d5] ${r.no === '1' ? 'bg-[#7eb8f8] text-white font-bold' : 'bg-white'}`}>{r.no}</td>
            <td className={`px-[2px] leading-[18px] overflow-hidden ${r.no === '1' ? 'border-2 border-[#808080]' : 'border-r border-b border-[#d5d5d5]'}`}>{r.name}</td>
            <td className={`${cell} px-[3px] ${MONO}`}>{r.dia}</td>
            <td className={`${cell} text-center ${MONO} underline`}>Φ</td>
            <td className={`${cell} px-[3px] ${MONO}`}>{r.fig}</td>
            <td className={`${cell} p-0`}><RebarShape kind={r.shape} /></td>
            <td className={`${cell} px-[3px] ${MONO} leading-[16px]`}>{r.formula}</td>
            <td className={`${cell} px-[2px] leading-[18px]`}>{r.desc}</td>
            <td className={`${cell} px-[3px] ${MONO}`}>{r.adj}</td>
            <td className={`${cell} px-[3px] ${MONO}`}>{r.len}</td>
            <td className={`${cell} px-[3px] ${MONO}`}>{r.count}</td>
            <td className={`${cell} px-[3px] ${MONO}`}>0</td>
            <td className={`${cell} px-[3px] ${MONO}`}>0</td>
            <td className={`${cell} px-[3px] ${MONO}`}>{r.w1}</td>
            <td className={`${cell} px-[3px] ${MONO}`}>{r.w2}</td>
            <td className={`${cell} px-[3px]`}>{r.kind}</td>
            <td className={`${cell} px-[3px] whitespace-nowrap`}>{r.lap}</td>
            <td className="border-b border-[#d5d5d5] pl-[3px] overflow-hidden whitespace-nowrap">普</td>
          </tr>
        ))}
        <tr className="h-[21px]">
          <td className="p-0 text-center text-[#333] bg-white border-b border-[#d5d5d5]">4</td>
          {COLS.map((_, i) => <td key={i} className={cell} />)}
        </tr>
      </tbody>
    </table>
  )
}

function RebarToolbar() {
  const nav = (d: string, color: string, w: string) => <span className={`${w} shrink-0 flex`}><ToolSvg d={d} color={color} /></span>
  return (
    <div className="h-[27px] flex items-center pl-[7px] shrink-0 border-b border-[#e3e3e3]">
      {nav('M3 2 V14 M13 2 L7 8 L13 14 Z', '#ccc', 'w-[31px]')}
      {nav('M12 2 L5 8 L12 14 Z', '#ccc', 'w-[31px]')}
      {nav('M5 2 L12 8 L5 14 Z', BLUE, 'w-[33px]')}
      {nav('M3 2 L10 8 L3 14 Z M13 2 V14', BLUE, 'w-[31px]')}
      <span className="w-[28px] shrink-0 flex"><ToolSvg d="M2 1 H14 V15 H2 Z M8 12 V4 M5 7 L8 4 L11 7" color="#bbb" /></span>
      <span className="w-[28px] shrink-0 flex"><ToolSvg d="M2 1 H14 V15 H2 Z M8 4 V12 M5 9 L8 12 L11 9" color={BLUE} /></span>
      <TinyButton w={57} label="插入" icon={<ToolSvg d="M1 3 H10 V8 H1 Z M1 12 H10 M12 5 H15 M13 3 L15 5 L13 7" />} />
      <TinyButton w={54} label="删除" icon={<IconBin />} />
      <TinyButton w={81} label="缩尺配筋" icon={<ToolSvg d="M2 2 V12 M5 6 V12 M8 8 V12 M11 8 V12 M14 8 V12 M1 14 H15" />} />
      <TinyButton w={80} label="钢筋信息" icon={<ToolSvg d="M9 15 H1 V1 H15 V9 M4 5 H12 M4 8 H9 M4 11 H7" />} />
      <TinyButton w={80} label="钢筋图库" icon={<ToolSvg d="M3 1 H13 A2 2 0 0 1 15 3 V13 A2 2 0 0 1 13 15 H3 A2 2 0 0 1 1 13 V3 A2 2 0 0 1 3 1 Z M5 6 V10 H11 V8 H6 M4 12 H12" />} />
      <span className="text-[#444]">其他</span>
      <span className="ml-[5px] text-[6px] text-[#999]">▼</span>
      <span className="ml-[10px] text-[#444] whitespace-nowrap">单构件钢筋总重(kg)：97.780</span>
    </div>
  )
}

function EditRebarPanel() {
  return (
    <div className="flex-1 mt-[5px] flex flex-col bg-white border-b border-[#ddd]">
      <CloseBar right={5} />
      <div className="h-[21px] mt-[1px] bg-[#f0f0f0] text-[#888] pl-[9px] leading-[21px] shrink-0">编辑钢筋</div>
      <RebarToolbar />
      <RebarTable />
      <div className="flex-1 flex">
        <div className="w-[8px] bg-[#f0f0f0]" />
      </div>
      <div className="h-[11px] flex items-center shrink-0 pl-[5px] pr-[6px] mb-[2px]">
        <span className="text-[8px] text-[#555] leading-none">◀</span>
        <div className="ml-[3px] w-[1104px] h-[8px] rounded-full bg-[#cbcbcb]" />
        <span className="ml-auto text-[8px] text-[#555] leading-none">▶</span>
      </div>
    </div>
  )
}

function StatusBar() {
  const btn = 'h-[25px] rounded-[3px] border border-[#aaa] flex items-center justify-center bg-white shrink-0'
  const on = 'h-[25px] rounded-[3px] border border-[#3b8eea] flex items-center justify-center bg-[#d5e6fb] shrink-0'
  return (
    <div className="h-[31px] bg-[#fafafa] flex items-center shrink-0 text-[#444]">
      <span className="ml-[2px] w-[90px] whitespace-nowrap">层高：&nbsp;3</span>
      <span className="w-[140px] whitespace-nowrap">标高：&nbsp;&nbsp;-0.05~2.95</span>
      <span className="w-[110px] whitespace-nowrap">选中图元：1(1)</span>
      <span className="w-[110px] whitespace-nowrap">隐藏图元：0</span>
      <div className={`${btn} w-[24px]`}><ToolSvg d="M3 1 V14 H14 M3 9 H7 V14" /></div>
      <div className={`${on} w-[36px] ml-[4px]`}><ToolSvg d="M2 2 H13 V14 H2 Z" /><span className="text-[6px] ml-[2px]">▼</span></div>
      <div className={`${btn} w-[25px] ml-[6px]`}><ToolSvg d="M2 2 L14 14 M14 2 L2 14" color="#999" /></div>
      <div className={`${btn} w-[36px] ml-[6px]`}><ToolSvg d="M2 14 L12 3 M1 15 H14" /><span className="text-[6px] ml-[2px]">▼</span></div>
      <div className={`${btn} w-[36px] ml-[3px]`}><ToolSvg d="M3 3 H8 M5.5 1 V6 M6 12 H14" /><span className="text-[6px] ml-[2px]">▼</span></div>
      <div className={`${on} w-[24px] ml-[3px]`}><ToolSvg d="M3 2 H12 V13 H3 Z M5 4 H10 V11 H5 Z" color="#1f5fc0" /></div>
      <div className={`${btn} w-[25px] ml-[4px]`}><ToolSvg d="M2 14 V8 L10 2 H14 M10 10 L14 12 L10 14 Z" /></div>
    </div>
  )
}

export default function App() {
  return (
    <div className="relative w-[1920px] h-[1048px] overflow-hidden bg-white text-[12px] leading-[16px] flex flex-col" style={{ fontFamily: FONT }}>
      <TopBar />
      <Ribbon />
      <div className="h-[27px] bg-[#f0f0f0] flex items-center pl-[3px] gap-[4px] shrink-0">
        <Combo value="首层" w={97} />
        <Combo value="梁" w={97} />
        <Combo value="连梁" w={97} />
        <Combo value="LL-1" w={99} />
        <Combo value="分层1" w={98} />
      </div>
      <div className="flex-1 flex bg-[#f4f4f4] min-h-0">
        <NavBar />
        <div className="w-[304px] shrink-0 ml-[4px] flex flex-col">
          <ComponentList />
          <PropertyList />
        </div>
        <div className="flex-1 ml-[4px] flex flex-col min-w-0">
          <Viewport />
          <EditRebarPanel />
        </div>
      </div>
      <StatusBar />
      <div className="h-[8px] bg-[#111] shrink-0 relative overflow-hidden">
        <div className="absolute left-[294px] top-0 w-[48px] h-full bg-[#444]" />
        <span className="absolute left-[1813px] top-[3px] text-[10px] text-white">16:01</span>
      </div>

      {/* handle between the lists and the view */}
      <div className="absolute left-[440px] top-[337px] w-[4px] h-[70px] bg-[#5a6470]" />
      <div className="absolute left-[1133px] top-[606px] w-[100px] h-[4px] bg-[#5f6b78]" />

      {/* red markup laid over the screenshot */}
      <div className="absolute left-[411px] top-[633px] w-[1385px] h-[252px] border-[3px] border-[#ff3b3b]" />
      <svg className="absolute left-[890px] top-[835px]" width="130" height="95" viewBox="890 835 130 95">
        <polygon points="1010,845 924,909 928,914 902,921 917,899 921,904" fill="#ff3b3b" />
      </svg>
      <div className="absolute left-[704px] top-[937px] text-[16px] leading-[20px] text-[#ff3b3b] whitespace-nowrap">
        当剪力墙水平钢筋代替连梁侧面钢筋时。连梁汇总计算没有拉筋的工程量。此时要单独在连梁中输入拉筋的信息吗？
      </div>
    </div>
  )
}
